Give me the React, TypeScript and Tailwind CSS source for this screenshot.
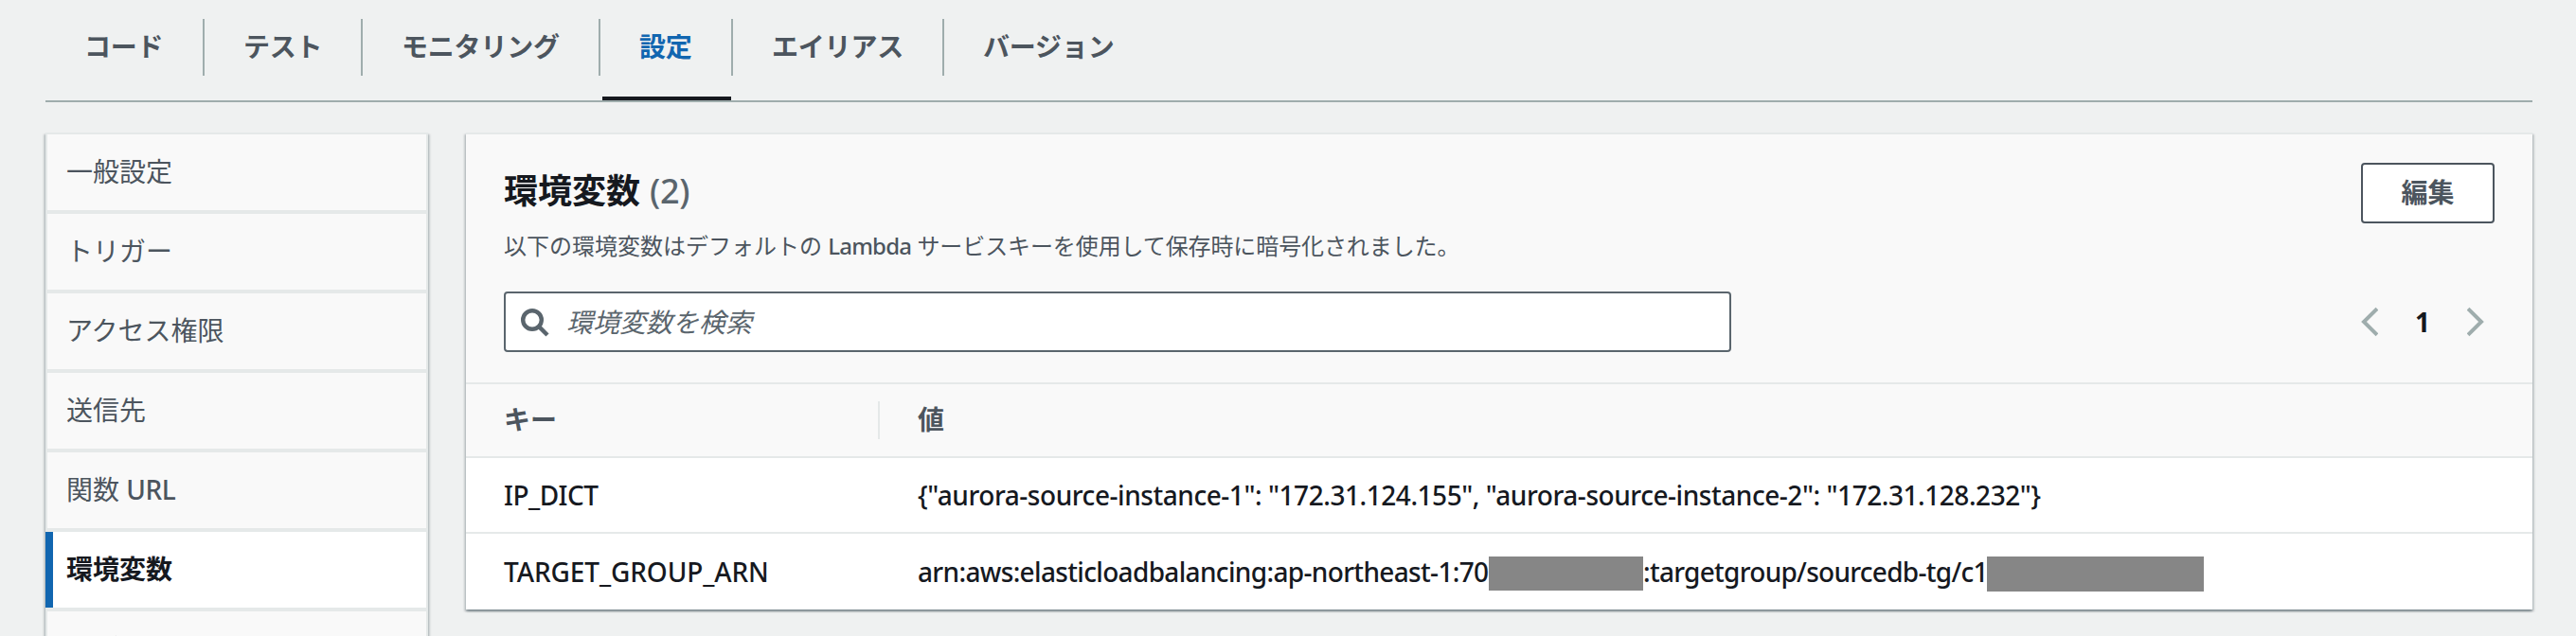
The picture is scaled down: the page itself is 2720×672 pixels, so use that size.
import React from "react";

const tabs = [
  { label: "コード", width: "w-[168px]" },
  { label: "テスト", width: "w-[167px]" },
  { label: "モニタリング", width: "w-[251px]" },
  { label: "設定", width: "w-[140px]", active: true },
  { label: "エイリアス", width: "w-[223px]" },
  { label: "バージョン", width: "w-[224px]", last: true },
];

const menu: { label: React.ReactNode; active?: boolean }[] = [
  { label: "一般設定" },
  { label: "トリガー" },
  { label: "アクセス権限" },
  { label: "送信先" },
  {
    label: (
      <>
        関数 <span className="font-medium tracking-[-0.5px]">URL</span>
      </>
    ),
  },
  { label: "環境変数", active: true },
  { label: "タグ" },
];

const panelShadow =
  "shadow-[0_2px_2px_0_rgba(0,28,36,0.3),2px_2px_2px_0_rgba(0,28,36,0.15),-2px_2px_2px_0_rgba(0,28,36,0.15)]";

function Tabs() {
  return (
    <nav className="ml-12 flex h-[108px] w-[2626px] border-b-2 border-[#9fadad] pt-5">
      {tabs.map((tab) => (
        <div key={tab.label} className={`flex flex-col ${tab.width}`}>
          <div
            className={`flex h-[60px] items-center whitespace-nowrap border-r-2 pl-[42px] font-bold tracking-[-0.2px] ${
              tab.last ? "border-transparent" : "border-[#9fadad]"
            } ${tab.active ? "text-[#1166b0]" : "text-[#4c555e]"}`}
          >
            <span className="-ml-px -mt-0.5">{tab.label}</span>
          </div>
          {tab.active && <div className="mx-0.5 mt-[22px] h-1 bg-[#16191f]" />}
        </div>
      ))}
    </nav>
  );
}

function SideMenu() {
  return (
    <aside className={`flex w-[404px] shrink-0 flex-col gap-1 bg-[#e5e9e9] pt-0.5 ${panelShadow}`}>
      {menu.map((item, i) => (
        <div
          key={i}
          className={`mr-0.5 flex h-20 items-center whitespace-nowrap ${
            item.active
              ? "border-l-8 border-[#1166b0] bg-white pl-3.5 font-bold text-[#16191f]"
              : "ml-0.5 bg-[#f9f9f9] pl-5 text-[#4c555e]"
          }`}
        >
          <span className="-mt-[3px]">{item.label}</span>
        </div>
      ))}
    </aside>
  );
}

function PanelHeader() {
  return (
    <header className="flex h-[264px] flex-col border-b-2 border-[#e5e9e9] bg-[#f9f9f9] pl-10 pr-10 pt-[30px]">
      <div className="flex h-[136px] justify-between">
        <div>
          <h2 className="flex h-[60px] items-center text-[36px] font-bold text-[#16191f]">
            環境変数
            <span className="ml-[10px] font-medium tracking-[-0.3px] text-[#5a656d]">(2)</span>
          </h2>
          <p className="flex h-[56px] items-center whitespace-nowrap text-[24px] text-[#4c555e]">
            <span>
              以下の環境変数はデフォルトの <span className="font-medium tracking-[-0.8px]">Lambda</span>{" "}
              <span className="tracking-[-0.1px]">サービスキーを使用して保存時に暗号化されました。</span>
            </span>
          </p>
        </div>
        <button className="flex h-16 w-[141px] items-center justify-center rounded border-2 border-[#4c555e] bg-white pb-0.5 font-bold text-[#4c555e]">
          編集
        </button>
      </div>
      <div className="flex h-16 items-center justify-between">
        <div className="flex h-16 w-[1296px] items-center rounded border-2 border-[#5a656d] bg-white pl-4">
          <svg width="32" height="32" viewBox="0 0 32 32" fill="none" stroke="#5a656d" strokeWidth="4.4">
            <circle cx="12" cy="14" r="9.8" />
            <path d="M18.6 20.6 L28 30" />
          </svg>
          <span className="ml-4 italic text-[#5a656d]">環境変数を検索</span>
        </div>
        <div className="mr-[11px] flex w-[130px] items-center justify-between">
          <svg width="18" height="32" viewBox="0 0 18 32" fill="none" stroke="#9fadad" strokeWidth="4">
            <path d="M17 2.2 L3 16 L17 29.8" />
          </svg>
          <span className="font-bold text-[#16191f]">1</span>
          <svg width="18" height="32" viewBox="0 0 18 32" fill="none" stroke="#9fadad" strokeWidth="4">
            <path d="M1 2.2 L15 16 L1 29.8" />
          </svg>
        </div>
      </div>
    </header>
  );
}

function VariablesTable() {
  return (
    <div className="text-[#16191f]">
      <div className="flex h-[78px] items-center border-b-2 border-[#e5e9e9] bg-[#f9f9f9] font-bold text-[#4c555e]">
        <div className="flex h-10 w-[437px] items-center border-r-2 border-[#e5e9e9] pl-10">
          <span className="-mt-0.5">キー</span>
        </div>
        <div className="-mt-0.5 pl-10">値</div>
      </div>
      <div className="flex h-20 items-center border-b-2 border-[#e5e9e9] font-medium">
        <div className="w-[436px] pl-10 tracking-[-0.5px]">IP_DICT</div>
        <div className="whitespace-nowrap pl-[41px] tracking-[-0.45px]">
          {'{"aurora-source-instance-1": "172.31.124.155", "aurora-source-instance-2": "172.31.128.232"}'}
        </div>
      </div>
      <div className="flex h-20 items-center font-medium">
        <div className="w-[436px] pl-10 tracking-[-0.1px]">TARGET_GROUP_ARN</div>
        <div className="flex items-center whitespace-nowrap pl-[41px]">
          <span className="w-[603px] tracking-[-0.66px]">arn:aws:elasticloadbalancing:ap-northeast-1:70</span>
          <span className="mt-1 h-9 w-[163px] bg-[#868686]" />
          <span className="w-[363px] tracking-[-0.72px]">:targetgroup/sourcedb-tg/c1</span>
          <span className="mt-[5px] h-[37px] w-[229px] bg-[#868686]" />
        </div>
      </div>
    </div>
  );
}

export default function App() {
  return (
    <div className="h-[672px] w-[2720px] overflow-hidden bg-[#eff1f1] font-['Noto_Sans','Noto_Sans_CJK_JP',sans-serif] text-[28px] leading-[40px]">
      <Tabs />
      <main className="ml-12 mt-8 flex items-start gap-10">
        <SideMenu />
        <section className={`w-[2182px] border-t-2 border-[#e5e9e9] bg-white ${panelShadow}`}>
          <PanelHeader />
          <VariablesTable />
        </section>
      </main>
    </div>
  );
}
